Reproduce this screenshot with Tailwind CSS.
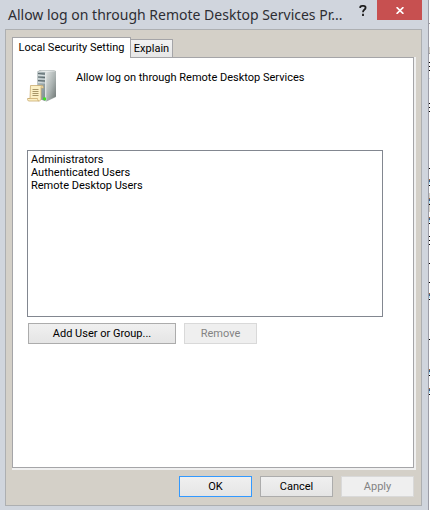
<!DOCTYPE html>
<html lang="en">
<head>
    <meta charset="UTF-8">
    <meta name="viewport" content="width=device-width, initial-scale=1.0">
    <title>Allow log on through Remote Desktop Services Properties</title>
    <script src="https://cdn.jsdelivr.net/npm/@tailwindcss/browser@4"></script>
</head>
<body class="flex min-h-screen bg-white font-[Roboto,'Liberation_Sans',sans-serif] text-[11px] leading-[13px] text-black">
    <!-- Dialog window -->
    <main class="flex min-w-0 flex-1 flex-col border-r border-[#9b9ca6] bg-[#d0d5dd] pr-1.5 pb-1 pl-[5px]">
        <header class="flex h-[29px] items-start">
            <h1 class="mt-1 ml-[3px] min-w-0 flex-1 font-['Noto_Sans',sans-serif] text-[14px] leading-[22px] whitespace-nowrap text-[#2d2d33]">Allow log on through Remote Desktop Services Pr...</h1>
            <button type="button" aria-label="Help" class="flex h-5 w-7 items-center justify-center">
                <svg class="h-[11px] w-2" viewBox="0 0 8 12" fill="none" stroke="#1e1e1e" stroke-width="2">
                    <path d="M1 3.2V2.6C1 1.600 1.800 1 3 1h1.600C6 1 6.800 1.700 6.800 2.900c0 1.200-.7 1.700-1.400 2.300C4.400 6 4 6.300 4 8M4 9.500v2.500"/>
                </svg>
            </button>
            <button type="button" aria-label="Close" class="flex h-5 w-[45px] items-center justify-center bg-[#c75050]">
                <svg class="h-[7px] w-2" viewBox="0 0 8 7" stroke="#fff" stroke-width="1.700">
                    <path d="M.6.2l6.800 6.600M7.400.2L.6 6.800"/>
                </svg>
            </button>
        </header>

        <div class="flex flex-1 flex-col border border-[#adafb1] bg-[#d4d0c8] px-1.5 pt-[7px] pb-2">
            <div role="tablist" class="flex items-end">
                <button type="button" role="tab" aria-selected="true" class="relative z-10 -mb-px h-[21px] w-[119px] border border-b-0 border-[#a5a5a8] bg-white pb-0.5">Local Security Setting</button>
                <button type="button" role="tab" aria-selected="false" class="h-[18px] w-[42px] border border-l-0 border-b-0 border-[#a5a5a8] bg-linear-to-b from-[#f2f2f2] to-[#e6e6e6]">Explain</button>
            </div>

            <section role="tabpanel" class="mr-px flex flex-1 flex-col border border-[#a5a5a8] bg-white px-3.5 shadow-[1px_1px_0_1px_#f0f0f0]">
                <div class="flex pt-3">
                    <!-- Server with a policy scroll -->
                    <svg class="mr-4 h-8 w-8 shrink-0" viewBox="0 0 32 32">
                        <defs>
                            <linearGradient id="side" x1="0" y1="0" x2="1" y2="1">
                                <stop offset="0" stop-color="#e2e6e5"/>
                                <stop offset=".55" stop-color="#a9b1b0"/>
                                <stop offset="1" stop-color="#6b7371"/>
                            </linearGradient>
                            <linearGradient id="front" x1="0" y1="0" x2="1" y2="1">
                                <stop offset="0" stop-color="#b9c4c6"/>
                                <stop offset="1" stop-color="#7b8a8d"/>
                            </linearGradient>
                        </defs>
                        <path d="M10.500 1.500L13 0h13l3 1v26l-9.500 4.500-9-3z" fill="#a4adac"/>
                        <path d="M10.500 1.500l8 .5v29l-8-3z" fill="url(#front)"/>
                        <path d="M18.500 2L29 1v25.500L19 31z" fill="url(#side)"/>
                        <path d="M11 1.500L14 .5h12l2.500.7-10 1z" fill="#e8eceb"/>
                        <path d="M11 3.500l7 .5M11 7l7 .5M11 10.500l7 .5" stroke="#5c6a6e" stroke-width="1.200"/>
                        <path d="M11 5.200l7 .5M11 8.800l7 .5M11 12.500l7 .5" stroke="#dce4e5"/>
                        <path d="M18.700 2.500V31" stroke="#eef1f0"/>
                        <path d="M16 27.500h3v3l-3-.8z" fill="#39e51e"/>
                        <path d="M3.500 15.500H14c2 0 2.500 1 2.300 2.500h-2.300v10.500c0 1.600-.8 2.500-2 2.500H2C.7 31 .2 29.500.7 28.500h2.300z" fill="#fcf0c4" stroke="#c9ab70" stroke-width=".8"/>
                        <path d="M14 18c0-1.500.5-2.300 1.400-2.300M.7 28.500h9.800c0 1.500.5 2.500 1.500 2.500" fill="none" stroke="#c9ab70" stroke-width=".8"/>
                        <path d="M5.500 19.500h6M5.500 21.500h6M5.500 23.500h6M5.500 25.500h6" stroke="#a89768"/>
                    </svg>
                    <label for="accounts" class="ml-px pt-px">Allow log on through Remote Desktop Services</label>
                </div>

                <select id="accounts" multiple class="mt-12 mr-4 h-[167px] appearance-none overflow-hidden border border-[#828790] bg-white px-[3px] py-0.5 outline-none">
                    <option class="h-[13px] min-h-[13px] p-0">Administrators</option>
                    <option class="h-[13px] min-h-[13px] p-0">Authenticated Users</option>
                    <option class="h-[13px] min-h-[13px] p-0">Remote Desktop Users</option>
                </select>

                <div class="mt-1.5 ml-px flex gap-2">
                    <button type="button" class="h-[21px] w-[148px] border border-[#acacac] bg-linear-to-b from-[#f0f0f0] to-[#e5e5e5]">Add User or Group...</button>
                    <button type="button" disabled class="h-[21px] w-[73px] border border-[#d9d9d9] bg-[#efefef] text-[#838383]">Remove</button>
                </div>
            </section>

            <footer class="mt-2 mr-px flex justify-end gap-2">
                <button type="submit" class="h-[21px] w-[73px] border border-[#3399ff] bg-linear-to-b from-[#f0f0f0] to-[#e5e5e5]">OK</button>
                <button type="button" class="h-[21px] w-[73px] border border-[#acacac] bg-linear-to-b from-[#f0f0f0] to-[#e5e5e5]">Cancel</button>
                <button type="button" disabled class="h-[21px] w-[73px] border border-[#d9d9d9] bg-[#efefef] text-[#838383]">Apply</button>
            </footer>
        </div>
    </main>

    <!-- Sliver of the window behind -->
    <svg class="h-[510px] w-px shrink-0" viewBox="0 0 1 510" shape-rendering="crispEdges">
        <path d="M0 47h1v6H0zM0 193h1v19H0z" fill="#d4d0c8"/>
        <path d="M0 23h1v1H0zM0 53h1v1H0z" fill="#a0a0a0"/>
        <path d="M0 78h1v1H0z" fill="#d9e4ee"/>
        <path d="M0 62h1v1H0zM0 66h1v1H0zM0 70h1v1H0zM0 103h1v1H0zM0 107h1v1H0zM0 111h1v1H0zM0 168h1v1H0zM0 185h1v1H0zM0 204h1v1H0zM0 223h1v1H0zM0 236h1v1H0zM0 240h1v1H0zM0 244h1v1H0zM0 263h1v1H0zM0 282h1v1H0zM0 299h1v1H0zM0 339h1v1H0zM0 375h1v1H0zM0 394h1v1H0z" fill="#000"/>
        <path d="M0 179h1v1H0zM0 198h1v1H0zM0 217h1v1H0zM0 293h1v1H0zM0 369h1v1H0zM0 388h1v1H0z" fill="#a0693f"/>
        <path d="M0 180h1v2H0zM0 199h1v2H0zM0 218h1v2H0zM0 294h1v2H0zM0 370h1v2H0zM0 389h1v2H0z" fill="#3f5f86"/>
        <path d="M0 182h1v2H0zM0 201h1v2H0zM0 220h1v2H0zM0 296h1v2H0zM0 372h1v2H0zM0 391h1v2H0z" fill="#a8dcf5"/>
    </svg>
</body>
</html>
